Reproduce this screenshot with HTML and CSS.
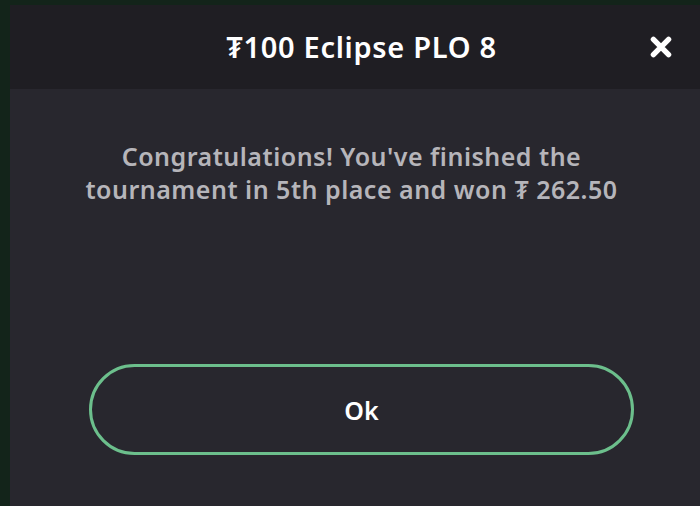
FILE: index.html
```html
<!DOCTYPE html>
<html lang="en">
<head>
<meta charset="utf-8">
<title>₮100 Eclipse PLO 8</title>
<link rel="stylesheet" href="styles.css">
</head>
<body>
<div class="stage">
  <div class="modal">
    <header class="modal-header">
      <h1 class="modal-title">₮100 Eclipse PLO 8</h1>
      <button class="close-btn" aria-label="Close">
        <svg viewBox="0 0 24 24" width="26" height="26" aria-hidden="true">
          <path d="M5 5 L19 19 M19 5 L5 19" stroke="#ffffff" stroke-width="5" stroke-linecap="round" fill="none"/>
        </svg>
      </button>
    </header>
    <section class="modal-body">
      <p class="message">Congratulations! You've finished the tournament in 5th place and won ₮ 262.50</p>
      <button class="ok-btn">Ok</button>
    </section>
  </div>
</div>
</body>
</html>
```
FILE: styles.css
```css
html, body {
  margin: 0;
  padding: 0;
  width: 700px;
  height: 506px;
  overflow: hidden;
  background: #13241a;
}

.stage {
  padding: 5px 0 0 10px;
  width: 713px;
}

.modal {
  width: 703px;
  height: 520px;
  background: #28272e;
  font-family: "Noto Sans", "DejaVu Sans", sans-serif;
  display: flex;
  flex-direction: column;
}

.modal-header {
  height: 84px;
  background: #1f1e23;
  display: flex;
  align-items: center;
  justify-content: center;
  position: relative;
}

.modal-title {
  margin: 0 0 2px 0;
  color: #ffffff;
  font-size: 29px;
  font-weight: 600;
  letter-spacing: 0.7px;
}

.close-btn {
  position: absolute;
  right: 39px;
  top: 29px;
  width: 26px;
  height: 26px;
  padding: 0;
  border: 0;
  background: none;
}

.close-btn svg {
  display: block;
}

.modal-body {
  display: flex;
  flex-direction: column;
  align-items: center;
  padding: 0 79px;
}

.message {
  margin: 51px 20px 0 0;
  width: 560px;
  text-align: center;
  color: #b6b5ba;
  font-size: 25px;
  font-weight: 600;
  line-height: 33px;
  letter-spacing: 0.5px;
}

.ok-btn {
  margin-top: 158px;
  width: 545px;
  height: 91px;
  border: 3px solid #6cbf8c;
  border-radius: 46px;
  background: transparent;
  color: #ffffff;
  font-family: "Noto Sans", "DejaVu Sans", sans-serif;
  font-size: 25px;
  font-weight: 600;
}
```
